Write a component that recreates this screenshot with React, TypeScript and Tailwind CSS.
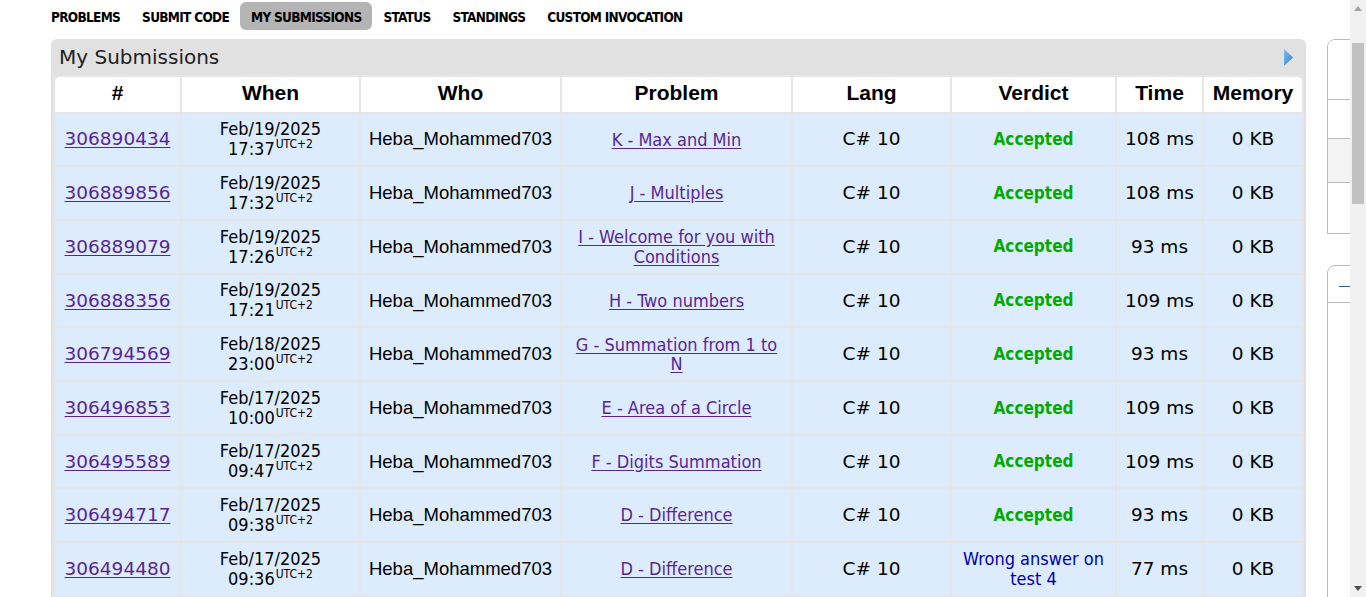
import React from "react";

const verdana = "font-['DejaVu_Sans',Verdana,sans-serif]";
const tahoma = "font-['DejaVu_Sans_Condensed','Liberation_Sans',Tahoma,sans-serif]";
const arial = "font-['Liberation_Sans',Arial,sans-serif]";

const rows = [
  { id: "306890434", date: "Feb/19/2025", time: "17:37", problem: "K - Max and Min", verdict: "Accepted", ms: "108 ms" },
  { id: "306889856", date: "Feb/19/2025", time: "17:32", problem: "J - Multiples", verdict: "Accepted", ms: "108 ms" },
  { id: "306889079", date: "Feb/19/2025", time: "17:26", problem: "I - Welcome for you with Conditions", verdict: "Accepted", ms: "93 ms" },
  { id: "306888356", date: "Feb/19/2025", time: "17:21", problem: "H - Two numbers", verdict: "Accepted", ms: "109 ms" },
  { id: "306794569", date: "Feb/18/2025", time: "23:00", problem: "G - Summation from 1 to N", verdict: "Accepted", ms: "93 ms" },
  { id: "306496853", date: "Feb/17/2025", time: "10:00", problem: "E - Area of a Circle", verdict: "Accepted", ms: "109 ms" },
  { id: "306495589", date: "Feb/17/2025", time: "09:47", problem: "F - Digits Summation", verdict: "Accepted", ms: "109 ms" },
  { id: "306494717", date: "Feb/17/2025", time: "09:38", problem: "D - Difference", verdict: "Accepted", ms: "93 ms" },
  { id: "306494480", date: "Feb/17/2025", time: "09:36", problem: "D - Difference", verdict: "Wrong answer on test 4", ms: "77 ms" },
];

const menu = ["PROBLEMS", "SUBMIT CODE", "MY SUBMISSIONS", "STATUS", "STANDINGS", "CUSTOM INVOCATION"];

const headers = ["#", "When", "Who", "Problem", "Lang", "Verdict", "Time", "Memory"];

const App = () => {
  return (
    <div className="w-[1366px] h-[597px] overflow-hidden bg-white flex">
      <div className="w-[1350px] shrink-0 overflow-hidden">
        {/* top menu */}
        <div className="h-[39px] pt-[2px] pl-[40px] flex items-start">
          {menu.map((m) => (
            <div
              key={m}
              className={`h-[28px] px-[11px] pt-[2px] flex items-center rounded-[6px] text-[13.5px] font-bold text-black tracking-[-0.7px] font-['Liberation_Sans_Narrow','DejaVu_Sans_Condensed',sans-serif] ${
                m === "MY SUBMISSIONS" ? "bg-[#b4b4b4]" : ""
              }`}
            >
              {m}
            </div>
          ))}
        </div>

        <div className="flex pl-[51px] gap-[21px]">
          {/* submissions frame */}
          <div className="w-[1255px] shrink-0 bg-[#e1e1e1] rounded-t-[6px] px-[2px]">
            <div className={`h-[36px] flex items-center justify-between pl-[6px] pr-[10px] text-[20px] text-[#222] ${verdana}`}>
              <span>My Submissions</span>
              <svg width="11" height="19" viewBox="0 0 11 19">
                <defs>
                  <linearGradient id="tri" x1="0" y1="0" x2="1" y2="1">
                    <stop offset="0" stopColor="#7cc0f4" />
                    <stop offset="1" stopColor="#2f7fd0" />
                  </linearGradient>
                </defs>
                <path d="M1 1 L10 9.5 L1 18 Z" fill="url(#tri)" />
              </svg>
            </div>
            <table className="table-fixed border-separate border-spacing-[2px] w-[1251px] bg-[#e6e6e6]">
              <colgroup>
                <col className="w-[125px]" />
                <col className="w-[177px]" />
                <col className="w-[199px]" />
                <col className="w-[229px]" />
                <col className="w-[157px]" />
                <col className="w-[163px]" />
                <col className="w-[85px]" />
                <col className="w-[98px]" />
              </colgroup>
              <thead>
                <tr>
                  {headers.map((h, i) => (
                    <th
                      key={h}
                      className={`h-[34px] p-0 pb-[3px] bg-white text-black text-[21px] font-bold text-center align-middle ${arial} ${
                        i === 0 ? "rounded-tl-[5px]" : ""
                      } ${i === headers.length - 1 ? "rounded-tr-[5px]" : ""}`}
                    >
                      {h}
                    </th>
                  ))}
                </tr>
              </thead>
              <tbody>
                {rows.map((r) => (
                  <tr key={r.id}>
                    <td className="h-[51.7px] p-0 bg-[#dcecfc] text-center align-middle">
                      <a className={`text-[18.5px] text-[#5a2593] underline underline-offset-2 ${verdana}`}>{r.id}</a>
                    </td>
                    <td className={`p-0 bg-[#dcecfc] text-center align-middle text-[18px] leading-[20px] text-black ${tahoma}`}>
                      <div>{r.date}</div>
                      <div>
                        {r.time}
                        <sup className="text-[12px] ml-[1px] relative top-[-7px]">UTC+2</sup>
                      </div>
                    </td>
                    <td className={`p-0 bg-[#dcecfc] text-center align-middle text-[18.5px] text-black ${arial}`}>
                      Heba_Mohammed703
                    </td>
                    <td className={`px-[10px] py-0 bg-[#dcecfc] text-center align-middle text-[18px] leading-[19.5px] ${tahoma}`}>
                      <a className="text-[#5a2593] underline underline-offset-2">{r.problem}</a>
                    </td>
                    <td className={`p-0 bg-[#dcecfc] text-center align-middle text-[18.5px] text-black ${verdana}`}>
                      C# 10
                    </td>
                    <td className={`px-[10px] py-0 bg-[#dcecfc] text-center align-middle text-[18px] leading-[19.5px] ${tahoma}`}>
                      {r.verdict === "Accepted" ? (
                        <span className="font-bold text-[17px] text-[#00aa00]">Accepted</span>
                      ) : (
                        <span className="text-[#0000aa]">{r.verdict}</span>
                      )}
                    </td>
                    <td className={`p-0 bg-[#dcecfc] text-center align-middle text-[18.5px] text-black ${verdana}`}>
                      {r.ms}
                    </td>
                    <td className={`p-0 bg-[#dcecfc] text-center align-middle text-[18.5px] text-black ${verdana}`}>
                      0 KB
                    </td>
                  </tr>
                ))}
              </tbody>
            </table>
          </div>

          {/* sidebar (clipped by scrollbar) */}
          <div className="w-[250px] shrink-0">
            <div className="border border-[#b9b9b9] rounded-t-[8px] overflow-hidden">
              <div className="h-[60px] border-b border-[#b9b9b9] bg-white" />
              <div className="h-[39px] border-b border-[#b9b9b9] bg-white" />
              <div className="h-[44px] border-b border-[#b9b9b9] bg-[#f3f3f3]" />
              <div className="h-[50px] bg-white" />
            </div>
            <div className="mt-[31px] border border-[#b9b9b9] rounded-t-[8px] h-[400px]">
              <div className="h-[37px] border-b border-[#b9b9b9] pt-[20px] pl-[11px]">
                <div className="w-[30px] h-[1px] bg-[#3b5998]" />
              </div>
            </div>
          </div>
        </div>
      </div>

      {/* scrollbar */}
      <div className="w-[16px] shrink-0 h-full bg-[#f1f1f1] flex flex-col items-center">
        <div className="h-[17px] flex items-center justify-center">
          <svg width="8" height="5" viewBox="0 0 8 5">
            <path d="M0 5 L4 0 L8 5 Z" fill="#a3a3a3" />
          </svg>
        </div>
        <div className="mt-[26px] w-[12px] h-[161px] bg-[#c1c1c1]" />
        <div className="flex-1" />
        <div className="h-[17px] flex items-center justify-center">
          <svg width="8" height="5" viewBox="0 0 8 5">
            <path d="M0 0 L8 0 L4 5 Z" fill="#505050" />
          </svg>
        </div>
      </div>
    </div>
  );
};

export default App;
